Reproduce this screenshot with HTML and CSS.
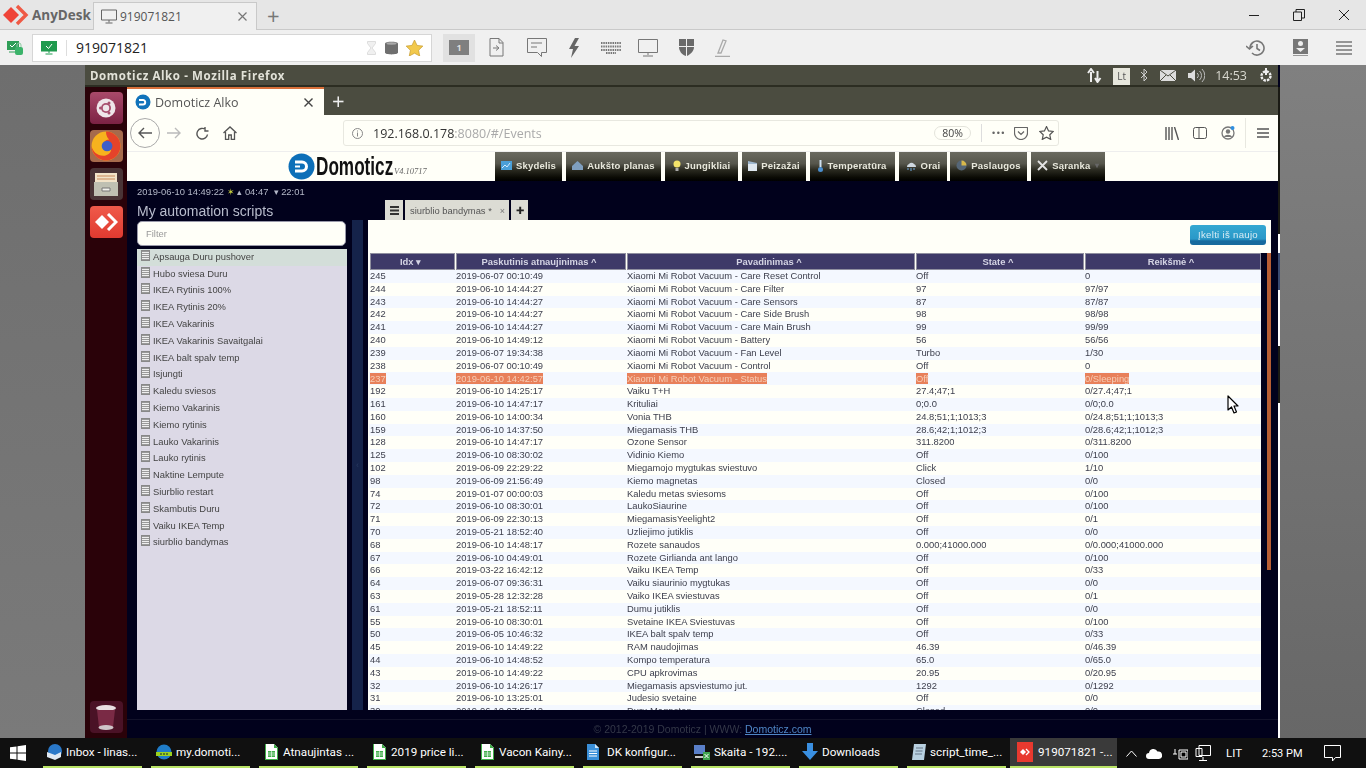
FILE: index.html
```html
<!DOCTYPE html>
<html lang="lt">
<head>
<meta charset="utf-8">
<title>AnyDesk - Domoticz</title>
<link rel="stylesheet" href="styles.css">
</head>
<body>
<div class="app">
  <header class="ad-title">
    <svg class="ad-logo" width="26" height="22" viewBox="0 0 26 22"><path d="M0 11 8 3l8 8-8 8z" fill="#ef4438"/><path d="M14 2l9 9-9 9" fill="none" stroke="#ef5a45" stroke-width="3.4"/></svg>
    <span class="ad-name">AnyDesk</span>
    <div class="ad-tab">
      <svg width="16" height="15" viewBox="0 0 16 15"><path d="M.5 1h15v10H.5zM8 11v2.5M4.500 14h7" fill="none" stroke="#666"/></svg>
      <span class="ad-tab-text">919071821</span>
      <svg class="ad-tab-x" width="9" height="9" viewBox="0 0 9 9"><path d="M.5.5l8 8M8.500.5l-8 8" stroke="#777" stroke-width="1.200"/></svg>
    </div>
    <span class="ad-plus">+</span>
    <div class="win-ctl">
      <svg width="12" height="12" viewBox="0 0 12 12"><path d="M1 6.500h10" stroke="#222"/></svg>
      <svg width="12" height="12" viewBox="0 0 12 12"><path d="M.5 3h8v8.500h-8zM3 3V.5h8.500V9H8.500" fill="none" stroke="#222"/></svg>
      <svg width="12" height="12" viewBox="0 0 12 12"><path d="M1 1l10 10M11 1 1 11" stroke="#222"/></svg>
    </div>
  </header>

  <div class="ad-toolbar">
    <svg class="ad-lock" width="17" height="16" viewBox="0 0 17 16"><rect y="1" width="12" height="9" fill="#2f9e57"/><path d="M3 5l2 2 4-4" fill="none" stroke="#fff"/><path d="M2 12h8" stroke="#2f9e57"/><rect x="8" y="7" width="8" height="8" rx="2" fill="#3bb36a"/><path d="M10 7V5a2 2 0 0 1 4 0v2" fill="none" stroke="#8cc9a2"/></svg>
    <div class="ad-addr">
      <svg width="16" height="14" viewBox="0 0 16 14"><rect width="16" height="10.500" fill="#1f9a4e"/><path d="M5 5l2.500 2.500L11 3" fill="none" stroke="#fff"/><path d="M8 10v2M4.500 13h7" stroke="#1f9a4e"/></svg>
      <span class="ad-addr-sep"></span>
      <span class="ad-addr-text">919071821</span>
      <svg class="ad-hour" width="9" height="14" viewBox="0 0 9 14"><path d="M.5.500h8v2L5 7l3.500 4.500v2h-8v-2L4 7 .5 2.500z" fill="#f0f0f0" stroke="#ddd"/></svg>
      <svg class="ad-db" width="13" height="14" viewBox="0 0 13 14"><path d="M0 2.500C0 0 13 0 13 2.500v9C13 14 0 14 0 11.500z" fill="#6f6f6f"/><ellipse cx="6.500" cy="2.500" rx="5" ry="1.200" fill="#aaa"/></svg>
      <svg class="ad-star" width="17" height="16" viewBox="0 0 24 23"><path d="M12 0l3.700 7.800 8.300 1-6.100 5.900 1.600 8.300L12 19l-7.500 4 1.600-8.300L0 8.800l8.300-1z" fill="#f2c94c" stroke="#c69a2e"/></svg>
    </div>
    <div class="ad-session"><span>1</span></div>
    <div class="ad-tools">
      <svg width="15" height="19" viewBox="0 0 15 19"><path d="M1 .5h9l4 4v13.500H1zM10 .5V5h4M4 10h5M7 7.500 10 10l-3 2.500" fill="none" stroke="#777"/></svg>
      <svg class="t-chat" width="20" height="20" viewBox="0 0 20 20"><path d="M.5.5h19v14h-5v4l-4-4H.5zM4 5h11M4 9h6" fill="none" stroke="#777"/></svg>
      <svg width="12" height="20" viewBox="0 0 12 20"><path d="M7 0 1 11h4L3 20l8-12H6.500L11 0z" fill="#666"/></svg>
      <svg width="20" height="12" viewBox="0 0 20 12"><path d="M0 1h20M0 4.500h20M0 8h20M5 11h10" stroke="#777" stroke-width="2" stroke-dasharray="1.500 .8"/></svg>
      <svg class="t-mon" width="20" height="18" viewBox="0 0 20 18"><path d="M.5.5h19v13H.5zM10 14v2M5 17h10" fill="none" stroke="#777"/></svg>
      <svg width="15" height="17" viewBox="0 0 15 17"><path d="M0 0h7v7H0zM8 0h7v7H8zM8 8h7c0 4-3 7-7 9z" fill="#6a6a6a"/><path d="M0 8h7v9C3 16 0 12 0 8z" fill="#6a6a6a"/></svg>
      <svg width="15" height="18" viewBox="0 0 15 18"><path d="M3 14 8 1l3 1-5 12zM0 17.500h15" fill="none" stroke="#aaa" stroke-width="1.300"/></svg>
    </div>
    <div class="ad-right">
      <svg width="19" height="16" viewBox="0 0 19 16"><path d="M4 8a7 7 0 1 1 2 5M0 6l3.500 3L7 6M11 4v4.500l3 2" fill="none" stroke="#777" stroke-width="1.600"/></svg>
      <svg width="15" height="17" viewBox="0 0 15 17"><path d="M0 0h15v15H0z" fill="#777"/><circle cx="7.500" cy="4.500" r="2.500" fill="#eee"/><path d="M3 9h9l-4.500 4z" fill="#eee"/><path d="M0 16.500h15" stroke="#999"/></svg>
      <svg width="16" height="14" viewBox="0 0 16 14"><path d="M0 1h16M0 5h16M0 9h16M0 13h16" stroke="#777" stroke-width="1.500"/></svg>
    </div>
  </div>

  <div class="remote">
    <div class="backdrop backdrop-l"></div>
    <div class="desktop">
      <div class="u-panel">
        <span class="u-title">Domoticz Alko - Mozilla Firefox</span>
        <div class="u-tray">
          <svg width="15" height="15" viewBox="0 0 15 15"><path d="M4 14V4M1 5l3-4 3 4M10.500 3v10M8 10l2.500 4 3-4" fill="none" stroke="#eee" stroke-width="2"/></svg>
          <span class="u-lt">Lt</span>
          <svg width="8" height="14" viewBox="0 0 8 14"><path d="M1 4l6 6-3 3V1l3 3-6 6" fill="none" stroke="#ccc"/></svg>
          <svg width="16" height="11" viewBox="0 0 16 11"><path d="M0 0h16v11H0z" fill="#ddd"/><path d="M0 0l8 6 8-6M0 11l6-6M16 11l-6-6" fill="none" stroke="#4b4c40"/></svg>
          <svg width="17" height="13" viewBox="0 0 17 13"><path d="M0 4h3l4-3.500v12L3 9H0z" fill="#ddd"/><path d="M9 4a3 3 0 0 1 0 5M11.500 2a6 6 0 0 1 0 9M14 0a9 9 0 0 1 0 13" fill="none" stroke="#bbb"/></svg>
          <span class="u-clock">14:53</span>
          <svg width="14" height="14" viewBox="0 0 14 14"><circle cx="7" cy="8" r="4.500" fill="none" stroke="#eee" stroke-width="2.400" stroke-dasharray="2.500 1"/><path d="M7 0v7" stroke="#eee" stroke-width="2"/></svg>
        </div>
      </div>
      <div class="desk-body">
        <nav class="launcher">
          <div class="l-ico l-ubuntu"><svg width="24" height="24" viewBox="0 0 24 24"><circle cx="12" cy="12" r="9.500" fill="#efe6ea"/><circle cx="12" cy="12" r="5" fill="#a8506f"/><circle cx="12" cy="12" r="3.200" fill="#efe6ea"/><circle cx="6.500" cy="12" r="1.500" fill="#a8506f"/><circle cx="15" cy="7" r="1.500" fill="#a8506f"/><circle cx="15" cy="17" r="1.500" fill="#a8506f"/></svg></div>
          <div class="l-ico l-fox"><svg width="30" height="30" viewBox="0 0 28 28"><circle cx="14" cy="14" r="13.500" fill="#f7b21e"/><path d="M14 .5A13.500 13.500 0 0 1 27.500 14c0 7.400-6 13.500-13.500 13.500S.5 21.400.5 14c1 5.500 6.500 10 12.500 9 5-1 7-5 5-8-1-2-5-2-6-4 1-2 3-3 5-3-2-2-3-4-3-7.500z" fill="#e5432a"/><circle cx="15" cy="14" r="5" fill="#3f5fc9"/></svg></div>
          <div class="l-ico l-files"><svg width="26" height="28" viewBox="0 0 26 28"><path d="M2 3h22v9H2z" fill="#f2e3c8"/><path d="M4 6h18M4 9h18" stroke="#c98a5a"/><path d="M1 12h24v14H1z" fill="#bfc0b2"/><path d="M9 18h8v3H9z" fill="#f0f0ea" stroke="#777"/></svg></div>
          <div class="l-ico l-anydesk"><svg width="24" height="18" viewBox="0 0 24 18"><path d="M1 9l7-7 7 7-7 7z" fill="#fff"/><path d="M14 1l8 8-8 8" fill="none" stroke="#fff" stroke-width="3"/></svg></div>
          <div class="l-spacer"></div>
          <div class="l-ico l-trash"><svg width="24" height="27" viewBox="0 0 24 27"><ellipse cx="12" cy="4" rx="10" ry="3" fill="#e8dfe2"/><path d="M3 6l2 17h14l2-17z" fill="#7a2a45"/><ellipse cx="12" cy="23.500" rx="7.500" ry="2.500" fill="#cfc4c8"/></svg></div>
        </nav>
        <div class="ff">
          <div class="ff-tabs">
            <div class="ff-tab">
              <svg width="16" height="16" viewBox="0 0 16 16"><circle cx="8" cy="8" r="7.500" fill="#1173bb"/><path d="M4 6h4a2.200 2.200 0 0 1 0 4.400H4" fill="none" stroke="#fff" stroke-width="2"/></svg>
              <span class="ff-tab-text">Domoticz Alko</span>
              <svg class="ff-x" width="9" height="9" viewBox="0 0 9 9"><path d="M.5.5l8 8M8.500.5l-8 8" stroke="#444" stroke-width="1.400"/></svg>
            </div>
            <span class="ff-plus">+</span>
          </div>
          <div class="ff-nav">
            <div class="ff-back"><svg width="14" height="12" viewBox="0 0 14 12"><path d="M14 6H1M6 1 1 6l5 5" fill="none" stroke="#555" stroke-width="1.400"/></svg></div>
            <svg class="ff-fwd" width="14" height="12" viewBox="0 0 14 12"><path d="M0 6h13M8 1l5 5-5 5" fill="none" stroke="#bbb" stroke-width="1.400"/></svg>
            <svg class="ff-reload" width="13" height="13" viewBox="0 0 13 13"><path d="M11.500 7.500A5.300 5.300 0 1 1 9.500 2.500M9 0v4h3.500" fill="none" stroke="#555" stroke-width="1.400"/></svg>
            <svg class="ff-home" width="14" height="14" viewBox="0 0 14 14"><path d="M.5 7 7 1l6.500 6M2.500 6v7.500h3.200V9h2.600v4.500h3.200V6" fill="none" stroke="#555" stroke-width="1.300"/></svg>
            <div class="ff-url">
              <svg width="11" height="11" viewBox="0 0 11 11"><circle cx="5.500" cy="5.500" r="5" fill="none" stroke="#888"/><path d="M5.500 4.500v4M5.500 2.500v1" stroke="#888"/></svg>
              <span class="ff-host">192.168.0.178<span class="ff-rest">:8080/#/Events</span></span>
              <span class="ff-zoom">80%</span>
              <span class="ff-sep"></span>
              <span class="ff-dots">•••</span>
              <svg class="ff-pocket" width="14" height="13" viewBox="0 0 14 13"><path d="M1 .5h12a.5.5 0 0 1 .5.5v5A6.500 6.500 0 0 1 .5 6V1a.5.5 0 0 1 .5-.5zM4 4.500l3 3 3-3" fill="none" stroke="#666" stroke-width="1.200"/></svg>
              <svg class="ff-star" width="15" height="14" viewBox="0 0 24 23"><path d="M12 1l3.400 7.100 7.600.9-5.600 5.400 1.500 7.600L12 18.300l-6.900 3.700 1.500-7.600L1 9l7.600-.9z" fill="none" stroke="#555" stroke-width="2"/></svg>
            </div>
            <div class="ff-tools">
              <svg width="14" height="13" viewBox="0 0 14 13"><path d="M1 0v13M4 0v13M7 0v13M9.500 0 13.500 13" stroke="#555" stroke-width="1.400"/></svg>
              <svg width="14" height="12" viewBox="0 0 14 12"><rect x=".5" y=".5" width="13" height="11" rx="2" fill="none" stroke="#555"/><path d="M6 .5v11" stroke="#555"/></svg>
              <svg width="14" height="14" viewBox="0 0 14 14"><circle cx="7" cy="7" r="6" fill="none" stroke="#777" stroke-width="1.300"/><circle cx="7" cy="5.500" r="2.200" fill="#777"/><path d="M3 11c1-3 7-3 8 0" fill="#777"/><circle cx="11.500" cy="2" r="2" fill="#2f8fe0"/></svg>
              <span class="ff-vsep"></span>
              <svg width="12" height="10" viewBox="0 0 12 10"><path d="M0 1h12M0 5h12M0 9h12" stroke="#555" stroke-width="1.300"/></svg>
            </div>
          </div>
          <main class="page">
            <div class="hdr">
              <div class="brand">
                <svg width="27" height="27" viewBox="0 0 27 27"><circle cx="13.500" cy="13.500" r="13" fill="#0d6fb8"/><path d="M7 9h7a4.500 4.500 0 0 1 0 9H7" fill="none" stroke="#fff" stroke-width="3"/><path d="M7 13.500h5" stroke="#fff" stroke-width="2"/></svg>
                <span class="brand-name">Domoticz</span>
                <span class="brand-ver">V4.10717</span>
              </div>
              <div class="menu">
                <a class="m m1"><svg width="11" height="9" viewBox="0 0 11 9"><rect width="11" height="9" fill="#4a9fd8"/><path d="M1 7l3-3 2 2 3-4" fill="none" stroke="#cfeaff"/></svg>Skydelis</a>
                <a class="m m2"><svg width="11" height="9" viewBox="0 0 11 9"><path d="M0 5l5.500-5L11 5v4H0z" fill="#7f9fbf"/></svg>Aukšto planas</a>
                <a class="m m3"><svg width="8" height="11" viewBox="0 0 8 11"><circle cx="4" cy="4" r="3.500" fill="#f3e36a"/><path d="M2.500 8h3v3h-3z" fill="#aaa"/></svg>Jungikliai</a>
                <a class="m m4"><svg width="9" height="10" viewBox="0 0 9 10"><path d="M0 3h9v7H0z" fill="#dfe8f0"/><path d="M0 0l9 2v1H0z" fill="#9fb8cf"/></svg>Peizažai</a>
                <a class="m m5"><svg width="5" height="12" viewBox="0 0 5 12"><path d="M1.500 0h2v7h-2z" fill="#cfe0f0"/><circle cx="2.500" cy="9.500" r="2.500" fill="#4a8fd0"/></svg>Temperatūra</a>
                <a class="m m6"><svg width="11" height="10" viewBox="0 0 11 10"><path d="M1 6a3 3 0 0 1 2-3 3 3 0 0 1 5 0 3 3 0 0 1 2 3z" fill="#cfd8e0"/><path d="M2 7v2M5 7v3M8 7v2" stroke="#6fa8dc"/></svg>Orai</a>
                <a class="m m7"><svg width="11" height="11" viewBox="0 0 11 11"><circle cx="5.500" cy="5.500" r="5" fill="#556677"/><path d="M5.500.5a5 5 0 0 1 5 5h-5z" fill="#d8b84a"/></svg>Paslaugos</a>
                <a class="m m8"><svg width="11" height="11" viewBox="0 0 11 11"><path d="M1 1l9 9M10 1 1 10" stroke="#e4e4e4" stroke-width="1.800"/></svg>Sąranka <i class="m-caret">▾</i></a>
              </div>
            </div>
            <div class="clock-line">2019-06-10 14:49:22 <span class="sun">✶</span> ▴ 04:47 &nbsp;▾ 22:01</div>
            <div class="workspace">
              <aside class="scripts">
                <h2 class="scripts-title">My automation scripts</h2>
                <div class="filter">Filter</div>
                <ul class="script-list">
                  <li class="script active"><i class="doc"></i>Apsauga Duru pushover</li>
                  <li class="script"><i class="doc"></i>Hubo sviesa Duru</li>
                  <li class="script"><i class="doc"></i>IKEA Rytinis 100%</li>
                  <li class="script"><i class="doc"></i>IKEA Rytinis 20%</li>
                  <li class="script"><i class="doc"></i>IKEA Vakarinis</li>
                  <li class="script"><i class="doc"></i>IKEA Vakarinis Savaitgalai</li>
                  <li class="script"><i class="doc"></i>IKEA balt spalv temp</li>
                  <li class="script"><i class="doc"></i>Isjungti</li>
                  <li class="script"><i class="doc"></i>Kaledu sviesos</li>
                  <li class="script"><i class="doc"></i>Kiemo Vakarinis</li>
                  <li class="script"><i class="doc"></i>Kiemo rytinis</li>
                  <li class="script"><i class="doc"></i>Lauko Vakarinis</li>
                  <li class="script"><i class="doc"></i>Lauko rytinis</li>
                  <li class="script"><i class="doc"></i>Naktine Lempute</li>
                  <li class="script"><i class="doc"></i>Siurblio restart</li>
                  <li class="script"><i class="doc"></i>Skambutis Duru</li>
                  <li class="script"><i class="doc"></i>Vaiku IKEA Temp</li>
                  <li class="script"><i class="doc"></i>siurblio bandymas</li>
                </ul>
              </aside>
              <div class="splitter"><span class="split-mark">‹</span></div>
              <section class="editor">
                <div class="ed-tabs">
                  <span class="ed-tab ed-tab-ico"><svg width="9" height="9" viewBox="0 0 9 9"><path d="M0 1h9M0 4.500h9M0 8h9" stroke="#333" stroke-width="2"/></svg></span>
                  <span class="ed-tab ed-tab-name">siurblio bandymas *<i class="ed-x">×</i></span>
                  <span class="ed-tab ed-tab-add">✚</span>
                </div>
                <div class="panel">
                  <div class="panel-top"><a class="reload">Įkelti iš naujo</a></div>
                  <div class="panel-body">
                    <div class="grid">
                      <div class="row head"><span>Idx ▾</span><span>Paskutinis atnaujinimas ^</span><span>Pavadinimas ^</span><span>State ^</span><span>Reikšmė ^</span></div>
                      <div class="row"><span>245</span><span>2019-06-07 00:10:49</span><span>Xiaomi Mi Robot Vacuum - Care Reset Control</span><span>Off</span><span>0</span></div>
                      <div class="row"><span>244</span><span>2019-06-10 14:44:27</span><span>Xiaomi Mi Robot Vacuum - Care Filter</span><span>97</span><span>97/97</span></div>
                      <div class="row"><span>243</span><span>2019-06-10 14:44:27</span><span>Xiaomi Mi Robot Vacuum - Care Sensors</span><span>87</span><span>87/87</span></div>
                      <div class="row"><span>242</span><span>2019-06-10 14:44:27</span><span>Xiaomi Mi Robot Vacuum - Care Side Brush</span><span>98</span><span>98/98</span></div>
                      <div class="row"><span>241</span><span>2019-06-10 14:44:27</span><span>Xiaomi Mi Robot Vacuum - Care Main Brush</span><span>99</span><span>99/99</span></div>
                      <div class="row"><span>240</span><span>2019-06-10 14:49:12</span><span>Xiaomi Mi Robot Vacuum - Battery</span><span>56</span><span>56/56</span></div>
                      <div class="row"><span>239</span><span>2019-06-07 19:34:38</span><span>Xiaomi Mi Robot Vacuum - Fan Level</span><span>Turbo</span><span>1/30</span></div>
                      <div class="row"><span>238</span><span>2019-06-07 00:10:49</span><span>Xiaomi Mi Robot Vacuum - Control</span><span>Off</span><span>0</span></div>
                      <div class="row sel"><span><b>237</b></span><span><b>2019-06-10 14:42:57</b></span><span><b>Xiaomi Mi Robot Vacuum - Status</b></span><span><b>Off</b></span><span><b>0/Sleeping</b></span></div>
                      <div class="row"><span>192</span><span>2019-06-10 14:25:17</span><span>Vaiku T+H</span><span>27.4;47;1</span><span>0/27.4;47;1</span></div>
                      <div class="row"><span>161</span><span>2019-06-10 14:47:17</span><span>Krituliai</span><span>0;0.0</span><span>0/0;0.0</span></div>
                      <div class="row"><span>160</span><span>2019-06-10 14:00:34</span><span>Vonia THB</span><span>24.8;51;1;1013;3</span><span>0/24.8;51;1;1013;3</span></div>
                      <div class="row"><span>159</span><span>2019-06-10 14:37:50</span><span>Miegamasis THB</span><span>28.6;42;1;1012;3</span><span>0/28.6;42;1;1012;3</span></div>
                      <div class="row"><span>128</span><span>2019-06-10 14:47:17</span><span>Ozone Sensor</span><span>311.8200</span><span>0/311.8200</span></div>
                      <div class="row"><span>125</span><span>2019-06-10 08:30:02</span><span>Vidinio Kiemo</span><span>Off</span><span>0/100</span></div>
                      <div class="row"><span>102</span><span>2019-06-09 22:29:22</span><span>Miegamojo mygtukas sviestuvo</span><span>Click</span><span>1/10</span></div>
                      <div class="row"><span>98</span><span>2019-06-09 21:56:49</span><span>Kiemo magnetas</span><span>Closed</span><span>0/0</span></div>
                      <div class="row"><span>74</span><span>2019-01-07 00:00:03</span><span>Kaledu metas sviesoms</span><span>Off</span><span>0/100</span></div>
                      <div class="row"><span>72</span><span>2019-06-10 08:30:01</span><span>LaukoSiaurine</span><span>Off</span><span>0/100</span></div>
                      <div class="row"><span>71</span><span>2019-06-09 22:30:13</span><span>MiegamasisYeelight2</span><span>Off</span><span>0/1</span></div>
                      <div class="row"><span>70</span><span>2019-05-21 18:52:40</span><span>Uzliejimo jutiklis</span><span>Off</span><span>0/0</span></div>
                      <div class="row"><span>68</span><span>2019-06-10 14:48:17</span><span>Rozete sanaudos</span><span>0.000;41000.000</span><span>0/0.000;41000.000</span></div>
                      <div class="row"><span>67</span><span>2019-06-10 04:49:01</span><span>Rozete Girlianda ant lango</span><span>Off</span><span>0/100</span></div>
                      <div class="row"><span>66</span><span>2019-03-22 16:42:12</span><span>Vaiku IKEA Temp</span><span>Off</span><span>0/33</span></div>
                      <div class="row"><span>64</span><span>2019-06-07 09:36:31</span><span>Vaiku siaurinio mygtukas</span><span>Off</span><span>0/0</span></div>
                      <div class="row"><span>63</span><span>2019-05-28 12:32:28</span><span>Vaiko IKEA sviestuvas</span><span>Off</span><span>0/1</span></div>
                      <div class="row"><span>61</span><span>2019-05-21 18:52:11</span><span>Dumu jutiklis</span><span>Off</span><span>0/0</span></div>
                      <div class="row"><span>55</span><span>2019-06-10 08:30:01</span><span>Svetaine IKEA Sviestuvas</span><span>Off</span><span>0/100</span></div>
                      <div class="row"><span>50</span><span>2019-06-05 10:46:32</span><span>IKEA balt spalv temp</span><span>Off</span><span>0/33</span></div>
                      <div class="row"><span>45</span><span>2019-06-10 14:49:22</span><span>RAM naudojimas</span><span>46.39</span><span>0/46.39</span></div>
                      <div class="row"><span>44</span><span>2019-06-10 14:48:52</span><span>Kompo temperatura</span><span>65.0</span><span>0/65.0</span></div>
                      <div class="row"><span>43</span><span>2019-06-10 14:49:22</span><span>CPU apkrovimas</span><span>20.95</span><span>0/20.95</span></div>
                      <div class="row"><span>32</span><span>2019-06-10 14:26:17</span><span>Miegamasis apsviestumo jut.</span><span>1292</span><span>0/1292</span></div>
                      <div class="row"><span>31</span><span>2019-06-10 13:25:01</span><span>Judesio svetaine</span><span>Off</span><span>0/0</span></div>
                      <div class="row"><span>30</span><span>2019-06-10 07:55:12</span><span>Duru Magnetas</span><span>Closed</span><span>0/0</span></div>
                    </div>
                    <div class="scrollbar"><div class="thumb"></div></div>
                  </div>
                </div>
              </section>
            </div>
            <footer class="foot"><span>© 2012-2019 Domoticz | WWW: <a class="foot-link">Domoticz.com</a></span></footer>
          </main>
        </div>
        <div class="edge"><i class="e-dark e1"></i><i class="e-white e2"></i><i class="e-blue e3"></i><i class="e-white e4"></i><i class="e-dark e5"></i><i class="e-white e6"></i></div>
      </div>
    </div>
    <div class="backdrop backdrop-r"></div>
  </div>

  <footer class="taskbar">
    <svg class="tb-start" width="16" height="16" viewBox="0 0 16 16"><path d="M0 2.300 6.500 1.400v6.100H0zM7.500 1.200 16 0v7.500H7.500zM0 8.500h6.500v6.100L0 13.700zM7.500 8.500H16V16l-8.500-1.200z" fill="#fff"/></svg>
    <div class="tb-items">
      <div class="tb-item"><svg width="16" height="16" viewBox="0 0 16 16"><circle cx="9" cy="7" r="7" fill="#2a78c8"/><path d="M1 8l8 3 6-3v5l-6 3-8-3z" fill="#dfe8f2"/></svg><span>Inbox - linas...</span></div>
      <div class="tb-item tb-web"><svg width="16" height="16" viewBox="0 0 16 16"><circle cx="8" cy="8" r="7.500" fill="#1f7cc8"/><path d="M0 8h16v4H0z" fill="#9ad21e"/><path d="M4 10h8" stroke="#123" stroke-dasharray="2 1"/></svg><span>my.domoti...</span></div>
      <div class="tb-item tb-sheet"><svg width="13" height="16" viewBox="0 0 13 16"><path d="M0 0h9l4 4v12H0z" fill="#fff"/><path d="M9 0l4 4H9z" fill="#3fae49"/><path d="M0 0h1v16H0zM12 4h1v12h-1zM0 15h13v1H0z" fill="#3fae49"/><path d="M3 7h7v6H3z" fill="#3fae49"/><path d="M3 9h7M3 11h7M6.500 7v6" stroke="#fff" stroke-width=".6"/></svg><span>Atnaujintas ...</span></div>
      <div class="tb-item tb-sheet"><svg width="13" height="16" viewBox="0 0 13 16"><path d="M0 0h9l4 4v12H0z" fill="#fff"/><path d="M9 0l4 4H9z" fill="#3fae49"/><path d="M0 0h1v16H0zM12 4h1v12h-1zM0 15h13v1H0z" fill="#3fae49"/><path d="M3 7h7v6H3z" fill="#3fae49"/><path d="M3 9h7M3 11h7M6.500 7v6" stroke="#fff" stroke-width=".6"/></svg><span>2019 price li...</span></div>
      <div class="tb-item tb-sheet"><svg width="13" height="16" viewBox="0 0 13 16"><path d="M0 0h9l4 4v12H0z" fill="#fff"/><path d="M9 0l4 4H9z" fill="#3fae49"/><path d="M0 0h1v16H0zM12 4h1v12h-1zM0 15h13v1H0z" fill="#3fae49"/><path d="M3 7h7v6H3z" fill="#3fae49"/><path d="M3 9h7M3 11h7M6.500 7v6" stroke="#fff" stroke-width=".6"/></svg><span>Vacon Kainy...</span></div>
      <div class="tb-item tb-doc"><svg width="12" height="16" viewBox="0 0 12 16"><path d="M0 0h8l4 4v12H0z" fill="#3a8fd8"/><path d="M2 7h8M2 9.500h8M2 12h8" stroke="#fff"/><path d="M8 0l4 4H8z" fill="#cfe5f8"/></svg><span>DK konfigur...</span></div>
      <div class="tb-item"><svg width="16" height="16" viewBox="0 0 16 16"><path d="M0 1h11v9H0z" fill="#5a7fc8"/><path d="M1 12h9v2H1z" fill="#c8c8c8"/><path d="M9 8h7v8H9z" fill="#3fa34d"/><path d="M10.500 10l4 4M14.500 10l-4 4" stroke="#fff"/></svg><span>Skaita - 192....</span></div>
      <div class="tb-item"><svg width="16" height="17" viewBox="0 0 16 17"><path d="M5 0h6v8h5l-8 9-8-9h5z" fill="#3a8fe0"/></svg><span>Downloads</span></div>
      <div class="tb-item tb-web"><svg width="14" height="17" viewBox="0 0 14 17"><path d="M2 1h12l-2 16H0z" fill="#b8d0e0"/><path d="M4 5h7M3.500 8h7M3 11h7" stroke="#678"/></svg><span>script_time_...</span></div>
      <div class="tb-item tb-active"><span class="tb-ad"><svg width="10" height="8" viewBox="0 0 10 8"><path d="M0 4l3-3 3 3-3 3z" fill="#fff"/><path d="M6 1l3 3-3 3" fill="none" stroke="#fff" stroke-width="1.300"/></svg></span><span>919071821 -...</span></div>
    </div>
    <div class="tb-tray">
      <svg width="11" height="7" viewBox="0 0 11 7"><path d="M.5 6.500l5-5.500 5 5.500" fill="none" stroke="#fff"/></svg>
      <svg class="tr-cloud" width="16" height="11" viewBox="0 0 16 11"><path d="M3 11a3 3 0 0 1 0-6 4.500 4.500 0 0 1 8.500-1.500A3.800 3.800 0 0 1 13 11z" fill="#fff"/></svg>
      <svg class="tr-pow" width="15" height="13" viewBox="0 0 15 13"><path d="M6 3h9v9H6z" fill="none" stroke="#fff"/><path d="M8 5h5v5H8zM0 7h4M2 2v5" stroke="#fff"/></svg>
      <svg class="tr-net" width="16" height="16" viewBox="0 0 16 16"><path d="M4 .5h11.500v10H4zM1 3.500h6v8H1zM8 12v3M4 15.500h8" fill="none" stroke="#fff"/></svg>
      <span class="tr-lang">LIT</span>
      <span class="tr-time">2:53 PM</span>
      <svg class="tr-note" width="17" height="17" viewBox="0 0 17 17"><path d="M.5.5h16v12h-5l-3 3.500v-3.500h-8z" fill="none" stroke="#fff"/></svg>
    </div>
  </footer>
  <svg class="pointer" width="12" height="19" viewBox="0 0 12 19"><path d="M1 1v14l3.500-3 2.500 6 2.500-1-2.500-6H11z" fill="#fff" stroke="#000" stroke-width="1.200" stroke-linejoin="round"/></svg>
</div>
</body>
</html>
```
FILE: styles.css
```css
* { box-sizing: border-box; }
html, body { margin: 0; padding: 0; height: 100%; overflow: hidden; }
body { font-family: "Liberation Sans", Arial, sans-serif; background: #000; }
i { font-style: normal; }
svg { display: block; flex: none; }
.app { width: 1366px; height: 768px; display: flex; flex-direction: column; overflow: hidden; position: relative; }
.pointer { position: absolute; left: 1227px; top: 395px; }

/* AnyDesk title */
.ad-title { height: 30px; flex: none; display: flex; align-items: center; background: #e6e6e6; border-bottom: 1px solid #c9c9c9; padding-left: 3px; }
.ad-name { font: bold 13.5px "Open Sans", sans-serif; color: #666; margin-left: 3px; width: 61px; }
.ad-tab { width: 164px; height: 28px; margin-top: 3px; display: flex; align-items: center; background: #f0f0f0; border: 1px solid #c9c9c9; border-bottom: 0; padding-left: 7px; }
.ad-tab-text { font: 12px "Open Sans", sans-serif; color: #555; margin-left: 3px; flex: 1; }
.ad-tab-x { margin-right: 9px; }
.ad-plus { font: 22px "Open Sans", sans-serif; color: #777; margin-left: 10px; line-height: 24px; }
.win-ctl { margin-left: auto; display: flex; gap: 33px; padding-right: 16px; }

/* AnyDesk toolbar */
.ad-toolbar { height: 35px; flex: none; display: flex; align-items: center; background: #f0f0f0; padding-left: 7px; }
.ad-addr { width: 400px; height: 28px; margin-left: 8px; display: flex; align-items: center; background: #fff; border: 1px solid #d6d6d6; padding-left: 8px; }
.ad-addr-sep { width: 1px; height: 16px; background: #ddd; margin-left: 9px; }
.ad-addr-text { font: 14px "Open Sans", sans-serif; color: #222; margin-left: 9px; flex: 1; }
.ad-hour { margin-right: 9px; }
.ad-db { margin-right: 8px; }
.ad-star { margin-right: 8px; }
.ad-session { width: 32px; height: 28px; margin-left: 11px; background: #e1e1e1; display: flex; align-items: center; justify-content: center; }
.ad-session span { width: 20px; height: 15px; background: #7f7f7f; color: #ddd; font: bold 9px/15px "Open Sans", sans-serif; text-align: center; }
.ad-tools { display: flex; align-items: center; margin-left: 14px; gap: 21px; }
.t-chat { margin-left: 2px; }
.t-mon { margin-left: -4px; }
.ad-right { margin-left: auto; display: flex; align-items: center; gap: 28px; padding-right: 14px; }

/* Remote */
.remote { flex: 1; display: flex; min-height: 0; }
.backdrop { height: 100%; }
.backdrop-l { width: 85px; background: linear-gradient(#6e6e6e, #7a7a7a); }
.backdrop-r { width: 86px; background: linear-gradient(#808080, #676767); }
.desktop { width: 1195px; display: flex; flex-direction: column; background: #01011c; filter: blur(.3px); }

/* Ubuntu panel */
.u-panel { height: 22px; flex: none; display: flex; align-items: center; background: #4b4c40; border-bottom: 2px solid #2c2d22; padding: 0 5px 0 5px; width: 1193px; }
.u-title { font: bold 11.500px "Open Sans", sans-serif; color: #e2e2d8; letter-spacing: .6px; }
.u-tray { margin-left: auto; display: flex; align-items: center; height: 100%; }
.u-lt { width: 17px; height: 17px; margin-left: 11px; align-self: flex-end; background: #e6e6dc; color: #555; font: 10px/17px "Open Sans", sans-serif; text-align: center; }
.u-tray svg:nth-of-type(2) { margin-left: 10px; }
.u-tray svg:nth-of-type(3) { margin-left: 12px; }
.u-tray svg:nth-of-type(4) { margin-left: 12px; }
.u-tray svg:nth-of-type(5) { margin-left: 12px; }
.u-clock { font: 12.500px "Open Sans", sans-serif; color: #d8d8cf; margin-left: 10px; }

.desk-body { flex: 1; display: flex; min-height: 0; }

/* Launcher */
.launcher { width: 42px; flex: none; display: flex; flex-direction: column; align-items: center; background: #2a0209; padding: 5px 0 5px; gap: 6px; }
.l-ico { width: 33px; height: 32px; border-radius: 4px; display: flex; align-items: center; justify-content: center; }
.l-ubuntu { background: linear-gradient(#a94a6a, #7c2244); }
.l-fox { background: #a66a4c; }
.l-files { background: #4a3436; }
.l-anydesk { background: linear-gradient(#f05a4a, #e03a30); }
.l-spacer { flex: 1; }
.l-trash { background: #4a1226; }

/* Firefox */
.ff { flex: 1; min-width: 0; display: flex; flex-direction: column; }
.ff-tabs { height: 28px; flex: none; display: flex; align-items: stretch; background: #4b4c40; }
.ff-tab { width: 197px; display: flex; align-items: center; background: #fffff8; border-top: 2px solid #d9703a; padding-left: 8px; }
.ff-tab-text { font: 12.500px "Open Sans", sans-serif; color: #555; margin-left: 4px; flex: 1; }
.ff-x { margin-right: 11px; }
.ff-plus { font: 22px/26px "Open Sans", sans-serif; color: #eee; margin-left: 8px; }
.ff-nav { height: 37px; flex: none; display: flex; align-items: center; background: #fffff8; padding-left: 3px; border-bottom: 1px solid #eee; }
.ff-back { width: 30px; height: 30px; border: 1px solid #aaa; border-radius: 50%; display: flex; align-items: center; justify-content: center; }
.ff-fwd { margin-left: 7px; }
.ff-reload { margin-left: 15px; }
.ff-home { margin-left: 14px; }
.ff-url { width: 716px; height: 26px; margin-left: 106px; display: flex; align-items: center; border: 1px solid #e8e8e0; border-radius: 3px; padding-left: 8px; }
.ff-host { font: 12.500px "Open Sans", sans-serif; color: #333; margin-left: 10px; flex: 1; }
.ff-rest { color: #aaa; }
.ff-zoom { width: 37px; height: 14px; border: 1px solid #e4e4dc; border-radius: 7px; font: 10.500px/12px "Open Sans", sans-serif; color: #444; text-align: center; }
.ff-sep { width: 1px; height: 18px; background: #ddd; margin-left: 10px; }
.ff-dots { font: 9px "Liberation Sans", sans-serif; color: #666; margin-left: 10px; letter-spacing: 1.5px; }
.ff-pocket { margin-left: 8px; }
.ff-star { margin-left: 11px; margin-right: 4px; }
.ff-tools { margin-left: auto; display: flex; align-items: center; padding-right: 9px; gap: 14px; }
.ff-vsep { width: 1px; height: 30px; background: #e8e8e0; margin-left: -4px; margin-right: -3px; }

/* Domoticz page */
.page { flex: 1; min-height: 0; display: flex; flex-direction: column; background: #01011c; }
.hdr { height: 29px; flex: none; display: flex; background: #fffff8; }
.brand { display: flex; align-items: center; width: 368px; padding-left: 161px; height: 29px; }
.brand-name { font: bold 26px "Liberation Sans", sans-serif; color: #111; display: inline-block; width: 78px; margin-left: 1px; transform: scaleX(.66); transform-origin: 0 50%; white-space: nowrap; }
.brand-ver { font: italic 8.500px "Liberation Serif", serif; color: #666; margin-top: 9px; white-space: nowrap; }
.menu { display: flex; gap: 4px; align-items: stretch; }
.m { display: flex; align-items: center; justify-content: center; gap: 4px; padding-bottom: 2px; color: #e8e8dc; font: bold 9.500px "Liberation Sans", sans-serif; letter-spacing: .2px; background: linear-gradient(#6a6a60 0, #56564c 40%, #2a2a20 62%, #0a0a04 88%, #000 100%); }
.m1 { width: 67px; } .m2 { width: 95px; } .m3 { width: 73px; } .m4 { width: 64px; }
.m5 { width: 85px; } .m6 { width: 48px; margin-right: -1px; } .m7 { width: 77px; } .m8 { width: 74px; }
.m-caret { color: #666; font-size: 8px; }

.clock-line { height: 19px; flex: none; padding-left: 10px; font-size: 9.400px; line-height: 21px; color: #b4b8c8; white-space: nowrap; }
.sun { color: #c8d040; }

.workspace { height: 510px; flex: none; display: flex; padding-left: 10px; }
.scripts { width: 210px; display: flex; flex-direction: column; }
.scripts-title { margin: 0; height: 21px; font: normal 14px/23px "Liberation Sans", sans-serif; color: #b8bccc; white-space: nowrap; }
.filter { width: 209px; height: 25px; border-radius: 5px; background: #fffff8; border: 1px solid #99a; font-size: 9.400px; line-height: 23px; color: #999; padding-left: 8px; }
.script-list { list-style: none; margin: 3px 0 0; padding: 0; flex: 1; background: #dcd9e6; }
.script { height: 16.800px; display: flex; align-items: center; font-size: 9.400px; color: #444; white-space: nowrap; padding: 0 0 2px 4px; }
.active { background: #d3ded9; }
.doc { width: 9px; height: 11px; margin-right: 3px; margin-top: -2px; border: 1px solid #888; background: repeating-linear-gradient(#999 0 1px, #eee 1px 2px); }
.splitter { width: 11px; margin: 20px 5px 0; background: #15234a; display: flex; align-items: center; justify-content: center; }
.split-mark { font-size: 9px; color: #2a3a60; }
.editor { flex: none; width: 903px; display: flex; flex-direction: column; }
.ed-tabs { height: 20px; flex: none; display: flex; gap: 2px; padding-left: 17px; }
.ed-tab { display: flex; align-items: center; justify-content: center; background: #dcdcd4; font-size: 9.400px; color: #555; height: 21px; }
.ed-tab-ico { width: 18px; }
.ed-tab-name { width: 104px; justify-content: flex-start; padding-left: 5px; }
.ed-x { margin-left: 8px; font-size: 9px; color: #777; }
.ed-tab-add { width: 17px; font-size: 10px; color: #222; }
.panel { flex: 1; min-height: 0; display: flex; flex-direction: column; position: relative; }
.panel-top { height: 33px; flex: none; background: #fffff8; display: flex; justify-content: flex-end; padding: 5px 5px 0 0; }
.reload { width: 76px; height: 20px; border-radius: 3px; background: linear-gradient(#35a8d2 0, #2a98c8 70%, #176a9e 80%); color: #d8ecf4; font-size: 9.600px; line-height: 19px; text-align: center; letter-spacing: .3px; }
.panel-body { flex: 1; min-height: 0; display: flex; overflow: hidden; }
.grid { width: 893px; height: 100%; overflow: hidden; padding-left: 1px; background: #fffff8; }
.row { display: grid; grid-template-columns: 86px 171px 289px 169px 177px; height: 12.800px; font-size: 9.400px; line-height: 12.800px; color: #3e404e; white-space: nowrap; background: #fffff8; }
.row:nth-child(even) { background: #f4f8ff; }
.row span { padding-left: 1px; overflow: hidden; }
.row.head { height: 17px; background: #fffff8; line-height: 15px; font-weight: bold; color: #d4d4e4; }
.row.head span { background: #3e3a68; border: 1px solid #8f8f9f; margin-left: 1px; text-align: center; padding: 0 4px 0 0; }
.sel b { font-weight: normal; background: #e8805a; color: #f6cdb6; display: inline-block; line-height: 11px; vertical-align: top; margin-top: 1px; }
.scrollbar { width: 10px; background: #01011c; padding-left: 6px; }
.thumb { width: 4px; height: 317px; background: #b75d33; }

.foot { flex: 1; min-height: 0; margin-top: 9px; border-top: 1px solid #12122a; text-align: center; font-size: 10.500px; color: #343848; padding-top: 3px; }
.foot-link { color: #4f86c6; text-decoration: underline; }

.edge { width: 2px; flex: none; display: flex; flex-direction: column; }
.edge i { display: block; }
.e-dark { background: #1a1a14; } .e-white { background: #fff; } .e-blue { background: #3a4a70; }
.e1 { height: 147px; } .e2 { height: 19px; } .e3 { height: 37px; } .e4 { height: 56px; } .e5 { height: 57px; } .e6 { height: 335px; }

/* Taskbar */
.taskbar { height: 30px; flex: none; display: flex; align-items: center; background: #101010; padding-left: 10px; color: #fff; position: relative; }
.tb-items { display: flex; margin-left: 17px; height: 30px; gap: 9px; }
.tb-item { width: 99px; height: 30px; display: flex; align-items: center; gap: 4px; padding: 0 0 1px 3px; border-bottom: 2px solid #b9e366; font: 11.700px Roboto, sans-serif; white-space: nowrap; overflow: hidden; }
.tb-web { padding-left: 5px; }
.tb-sheet { padding-left: 6px; gap: 5px; }
.tb-doc { padding-left: 4px; gap: 8px; }
.tb-active { width: 107px; background: #3a3a3a; padding-left: 7px; gap: 5px; margin-left: -5px; }
.tb-ad { width: 16px; height: 20px; background: #e8392f; display: flex; align-items: center; justify-content: center; flex: none; }
.tb-tray { display: flex; align-items: center; margin-left: 9px; font: 11px Roboto, sans-serif; }
.tr-cloud { margin-left: 9px; }
.tr-pow { margin-left: 11px; }
.tr-net { margin-left: 7px; }
.tr-lang { margin-left: 15px; font-size: 11.500px; }
.tr-time { margin-left: 20px; width: 46px; white-space: nowrap; }
.tr-note { margin-left: 16px; }
```
